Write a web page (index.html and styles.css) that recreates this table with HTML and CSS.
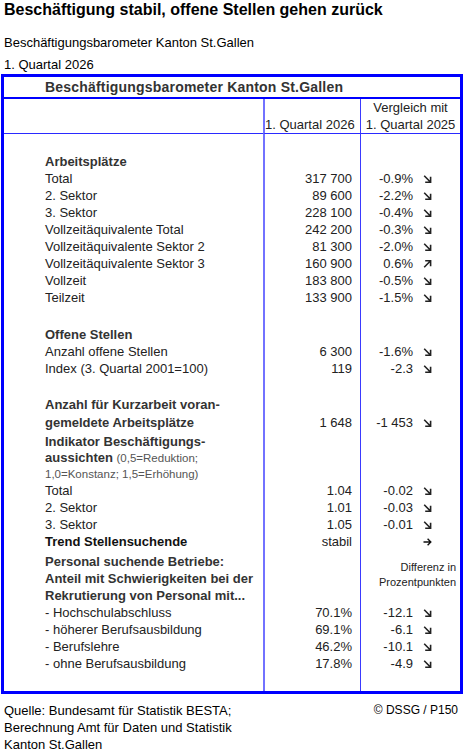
FILE: index.html
```html
<!DOCTYPE html>
<html lang="de">
<head>
    <meta charset="UTF-8">
    <title>Beschäftigungsbarometer Kanton St.Gallen</title>
    <link rel="stylesheet" href="styles.css">
</head>
<body>
    <svg class="icon-defs" xmlns="http://www.w3.org/2000/svg">
        <symbol id="down" viewBox="0 0 9 8">
            <path d="M1.2 0.8 L7.6 7.2 M7.6 1.8 V7.2 H2.2" fill="none" stroke="#222" stroke-width="1.6"/>
        </symbol>
        <symbol id="up" viewBox="0 0 9 8">
            <path d="M1.2 7.2 L7.6 0.8 M2.2 0.8 H7.6 V6.2" fill="none" stroke="#222" stroke-width="1.6"/>
        </symbol>
        <symbol id="flat" viewBox="0 0 9 8">
            <path d="M0.5 4 H7.8 M4.6 0.8 L7.8 4 L4.6 7.2" fill="none" stroke="#111" stroke-width="1.4"/>
        </symbol>
    </svg>

    <h1 class="headline">Beschäftigung stabil, offene Stellen gehen zurück</h1>
    <p class="subline">Beschäftigungsbarometer Kanton St.Gallen</p>
    <p class="period">1. Quartal 2026</p>

    <table class="barometer">
        <colgroup>
            <col class="col-label">
            <col class="col-value">
            <col class="col-diff">
        </colgroup>
        <tr class="title-row">
            <td colspan="3">Beschäftigungsbarometer Kanton St.Gallen</td>
        </tr>
        <tr class="head-row">
            <td></td>
            <td class="value">1. Quartal 2026</td>
            <td class="diff-head">Vergleich mit<br>1. Quartal 2025</td>
        </tr>
        <tr class="gap"><td class="gap-19"></td><td></td><td></td></tr>

        <tr><td class="label section">Arbeitsplätze</td><td></td><td></td></tr>
        <tr><td class="label">Total</td><td class="value">317 700</td><td class="diff"><span class="num">-0.9%</span><svg class="arr"><use href="#down"/></svg></td></tr>
        <tr><td class="label">2. Sektor</td><td class="value">89 600</td><td class="diff"><span class="num">-2.2%</span><svg class="arr"><use href="#down"/></svg></td></tr>
        <tr><td class="label">3. Sektor</td><td class="value">228 100</td><td class="diff"><span class="num">-0.4%</span><svg class="arr"><use href="#down"/></svg></td></tr>
        <tr><td class="label">Vollzeitäquivalente Total</td><td class="value">242 200</td><td class="diff"><span class="num">-0.3%</span><svg class="arr"><use href="#down"/></svg></td></tr>
        <tr><td class="label">Vollzeitäquivalente Sektor 2</td><td class="value">81 300</td><td class="diff"><span class="num">-2.0%</span><svg class="arr"><use href="#down"/></svg></td></tr>
        <tr><td class="label">Vollzeitäquivalente Sektor 3</td><td class="value">160 900</td><td class="diff"><span class="num">0.6%</span><svg class="arr"><use href="#up"/></svg></td></tr>
        <tr><td class="label">Vollzeit</td><td class="value">183 800</td><td class="diff"><span class="num">-0.5%</span><svg class="arr"><use href="#down"/></svg></td></tr>
        <tr><td class="label">Teilzeit</td><td class="value">133 900</td><td class="diff"><span class="num">-1.5%</span><svg class="arr"><use href="#down"/></svg></td></tr>
        <tr class="gap"><td class="gap-20"></td><td></td><td></td></tr>

        <tr><td class="label section">Offene Stellen</td><td></td><td></td></tr>
        <tr><td class="label">Anzahl offene Stellen</td><td class="value">6 300</td><td class="diff"><span class="num">-1.6%</span><svg class="arr"><use href="#down"/></svg></td></tr>
        <tr><td class="label">Index (3. Quartal 2001=100)</td><td class="value">119</td><td class="diff"><span class="num">-2.3</span><svg class="arr"><use href="#down"/></svg></td></tr>
        <tr class="gap"><td class="gap-19"></td><td></td><td></td></tr>

        <tr class="kurz-row">
            <td class="label section">Anzahl für Kurzarbeit voran-<br>gemeldete Arbeitsplätze</td>
            <td class="value">1 648</td>
            <td class="diff"><span class="num">-1 453</span><svg class="arr"><use href="#down"/></svg></td>
        </tr>
        <tr class="outlook-row">
            <td class="label section">Indikator Beschäftigungs-<br>aussichten <span class="note">(0,5=Reduktion;<br>1,0=Konstanz; 1,5=Erhöhung)</span></td>
            <td></td><td></td>
        </tr>
        <tr><td class="label">Total</td><td class="value">1.04</td><td class="diff"><span class="num">-0.02</span><svg class="arr"><use href="#down"/></svg></td></tr>
        <tr><td class="label">2. Sektor</td><td class="value">1.01</td><td class="diff"><span class="num">-0.03</span><svg class="arr"><use href="#down"/></svg></td></tr>
        <tr><td class="label">3. Sektor</td><td class="value">1.05</td><td class="diff"><span class="num">-0.01</span><svg class="arr"><use href="#down"/></svg></td></tr>
        <tr><td class="label trend">Trend Stellensuchende</td><td class="value">stabil</td><td class="diff"><span class="num"></span><svg class="arr"><use href="#flat"/></svg></td></tr>

        <tr class="staff-row">
            <td class="label section">Personal suchende Betriebe:<br>Anteil mit Schwierigkeiten bei der<br>Rekrutierung von Personal mit...</td>
            <td></td>
            <td class="diff-note">Differenz in<br>Prozentpunkten</td>
        </tr>
        <tr><td class="label">- Hochschulabschluss</td><td class="value">70.1%</td><td class="diff"><span class="num">-12.1</span><svg class="arr"><use href="#down"/></svg></td></tr>
        <tr><td class="label">- höherer Berufsausbildung</td><td class="value">69.1%</td><td class="diff"><span class="num">-6.1</span><svg class="arr"><use href="#down"/></svg></td></tr>
        <tr><td class="label">- Berufslehre</td><td class="value">46.2%</td><td class="diff"><span class="num">-10.1</span><svg class="arr"><use href="#down"/></svg></td></tr>
        <tr><td class="label">- ohne Berufsausbildung</td><td class="value">17.8%</td><td class="diff"><span class="num">-4.9</span><svg class="arr"><use href="#down"/></svg></td></tr>
        <tr class="gap"><td class="gap-19"></td><td></td><td></td></tr>
    </table>

    <div class="footer">
        <p class="source">Quelle: Bundesamt für Statistik BESTA;<br>Berechnung Amt für Daten und Statistik<br>Kanton St.Gallen</p>
        <p class="copy">© DSSG / P150</p>
    </div>
</body>
</html>
```

FILE: styles.css
```css
* {
    font-family: "Liberation Sans", Arial, sans-serif;
}
body {
    margin: 0;
    width: 465px;
    font-size: 13px;
    color: #000;
    background: #fff;
}
.icon-defs {
    display: none;
}
.headline {
    margin: 1px 0 0;
    padding-left: 4px;
    font-size: 16px;
    line-height: 18px;
    font-weight: bold;
}
.subline {
    margin: 15px 0 0;
    padding-left: 4px;
    line-height: 17px;
}
.period {
    margin: 5px 0 0;
    padding-left: 4px;
    line-height: 17px;
}

/* table */
.barometer {
    margin: 1px 0 0 1px;
    width: 462px;
    border: 3px solid #0000ff;
    border-spacing: 0;
    table-layout: fixed;
    color: #222;
    font-size: 13px;
}
.col-label {
    width: 259px;
}
.col-value {
    width: 97px;
}
.col-diff {
    width: 100px;
}
.barometer td {
    padding: 0;
    line-height: 17px;
    vertical-align: top;
    white-space: nowrap;
}
.barometer tr:not(.title-row) td:nth-child(2) {
    border-left: 2px solid #7272ff;
}
.barometer tr:not(.title-row) td:nth-child(3) {
    border-left: 1px solid #3a3aff;
}
.title-row td {
    padding-left: 41px;
    font-size: 14px;
    font-weight: bold;
    letter-spacing: 0.2px;
    line-height: 20px;
    color: #333;
    border-bottom: 2px solid #0000ff;
}
.head-row td {
    height: 34px;
    border-bottom: 1px solid #2a2aff;
}
.head-row .value {
    vertical-align: bottom;
}
.diff-head {
    text-align: center;
}
.gap-19 {
    height: 19px;
}
.gap-20 {
    height: 20px;
}
.label {
    padding-left: 41px !important;
}
.section {
    font-weight: bold;
    color: #333;
}
.trend {
    font-weight: bold;
    color: #111;
}
.value {
    text-align: right;
    padding-right: 8px !important;
}
.num {
    display: inline-block;
    width: 52px;
    text-align: right;
}
.arr {
    width: 9px;
    height: 8px;
    margin-left: 10px;
    vertical-align: 0;
}

.kurz-row td {
    line-height: 18px;
    vertical-align: bottom;
}
.outlook-row td {
    padding-top: 2px;
    line-height: 16px;
}
.note {
    font-size: 11.5px;
    font-weight: normal;
    color: #555;
}
.staff-row td {
    padding-top: 3px;
}
.staff-row .diff-note {
    padding-top: 10px;
    padding-right: 4px;
    font-size: 11px;
    line-height: 15px;
    text-align: right;
    color: #222;
}

.footer {
    display: flex;
    justify-content: space-between;
    margin-top: 8px;
    padding: 0 7px 0 4px;
}
.footer p {
    margin: 0;
    line-height: 17px;
}
.copy {
    font-size: 12px;
}
```
